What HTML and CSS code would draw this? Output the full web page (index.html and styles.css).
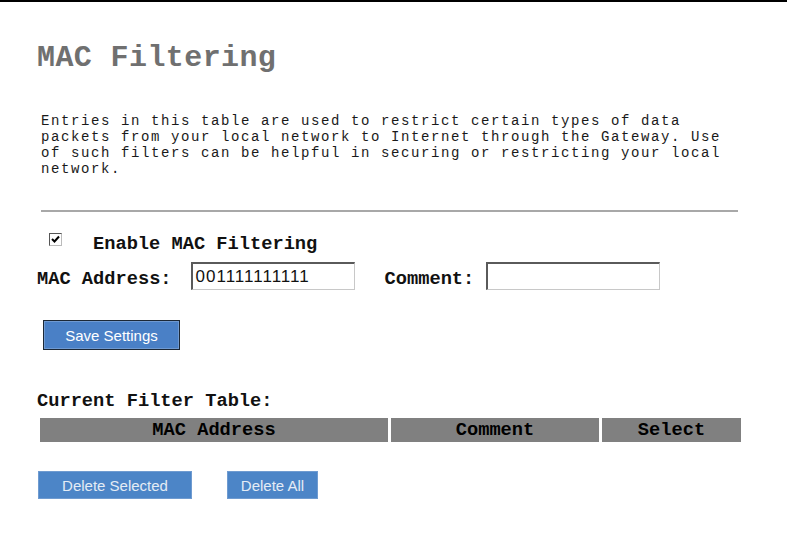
FILE: index.html
```html
<!DOCTYPE html>
<html>
<head>
<meta charset="utf-8">
<title>MAC Filtering</title>
<link rel="stylesheet" href="styles.css">
</head>
<body>
<div class="topbar"></div>
<main class="page">
  <h1 class="title">MAC Filtering</h1>
  <p class="intro">Entries in this table are used to restrict certain types of data<br>packets from your local network to Internet through the Gateway. Use<br>of such filters can be helpful in securing or restricting your local<br>network.</p>
  <hr class="rule">
  <div class="enable-row">
    <span class="checkbox"><svg width="9" height="9" viewBox="0 0 9 9"><path d="M1 4 L3.5 6.5 L8 1.5" fill="none" stroke="#000" stroke-width="2"/></svg></span>
    <span class="label">Enable MAC Filtering</span>
  </div>
  <div class="field-row">
    <span class="label">MAC Address:</span>
    <span class="input mac-input">001111111111</span>
    <span class="label comment-label">Comment:</span>
    <span class="input comment-input"></span>
  </div>
  <button class="btn btn-save">Save Settings</button>
  <div class="label table-title">Current Filter Table:</div>
  <table class="filter-table">
    <tr>
      <th class="col-mac">MAC Address</th>
      <th class="col-comment">Comment</th>
      <th class="col-select">Select</th>
    </tr>
  </table>
  <div class="actions">
    <button class="btn btn-del btn-del-sel">Delete Selected</button>
    <button class="btn btn-del btn-del-all">Delete All</button>
  </div>
</main>
</body>
</html>
```

FILE: styles.css
```css
html, body {
  margin: 0;
  padding: 0;
  background: #fff;
}
body {
  width: 787px;
  height: 554px;
  overflow: hidden;
  font-family: "Liberation Mono", "DejaVu Sans Mono", monospace;
  color: #111;
}
.topbar {
  height: 2px;
  background: #000;
}
.page {
  padding-left: 37px;
}
.title {
  margin: 38px 0 0 0;
  font-size: 30px;
  line-height: 36px;
  font-weight: bold;
  color: #707070;
  letter-spacing: 0.4px;
}
.intro {
  margin: 37px 0 0 4px;
  font-size: 14px;
  letter-spacing: 1.6px;
  line-height: 16px;
  color: #1a1a1a;
}
.rule {
  margin: 33px 0 0 4px;
  width: 697px;
  height: 0;
  border: 0;
  border-top: 2px solid #a8a8a8;
}
.label {
  font-weight: bold;
  font-size: 18.7px;
  line-height: 22px;
  color: #111;
}
.enable-row {
  display: flex;
  align-items: flex-start;
  margin-top: 21px;
  padding-left: 12px;
  height: 22px;
}
.checkbox {
  width: 11px;
  height: 11px;
  border-top: 1px solid #555;
  border-left: 1px solid #555;
  border-right: 1px solid #bbb;
  border-bottom: 1px solid #bbb;
  display: flex;
  align-items: center;
  justify-content: center;
  margin-right: 31px;
}
.field-row {
  display: flex;
  align-items: flex-end;
  margin-top: 7px;
  height: 28px;
}
.input {
  box-sizing: border-box;
  height: 28px;
  border-top: 2px solid #5a5a5a;
  border-left: 2px solid #5a5a5a;
  border-right: 1px solid #c8c8c8;
  border-bottom: 1px solid #c8c8c8;
  font-family: "Liberation Sans", Arial, sans-serif;
  font-size: 17px;
  letter-spacing: 1px;
  line-height: 22px;
  padding: 2px 3px;
  color: #111;
  background: #fff;
}
.mac-input {
  margin-left: 19px;
  width: 164px;
}
.comment-label {
  margin-left: 30px;
}
.comment-input {
  margin-left: 12px;
  width: 174px;
}
.btn {
  display: block;
  box-sizing: border-box;
  font-family: "Liberation Sans", Arial, sans-serif;
  font-size: 15px;
  padding: 0;
  cursor: pointer;
}
.btn-save {
  margin: 30px 0 0 6px;
  width: 137px;
  height: 30px;
  background: #4a80c6;
  color: #fff;
  border: 1px solid #1c2836;
  box-shadow: inset 0 0 0 1px #6f9ad2;
}
.table-title {
  margin-top: 40px;
}
.filter-table {
  margin-top: 3px;
  border-collapse: separate;
  border-spacing: 3px;
}
.filter-table th {
  background: #808080;
  height: 24px;
  padding: 0;
  font-size: 18.7px;
  line-height: 22px;
  font-weight: bold;
  text-align: center;
  color: #000;
}
.col-mac { width: 348px; }
.col-comment { width: 208px; }
.col-select { width: 139px; }
.actions {
  display: flex;
  margin-top: 26px;
  padding-left: 1px;
  gap: 35px;
}
.btn-del {
  height: 28px;
  background: #4c85c7;
  color: #e4ecf5;
  border: 1px solid #6f9bd0;
}
.btn-del-sel { width: 154px; }
.btn-del-all { width: 91px; }
```
